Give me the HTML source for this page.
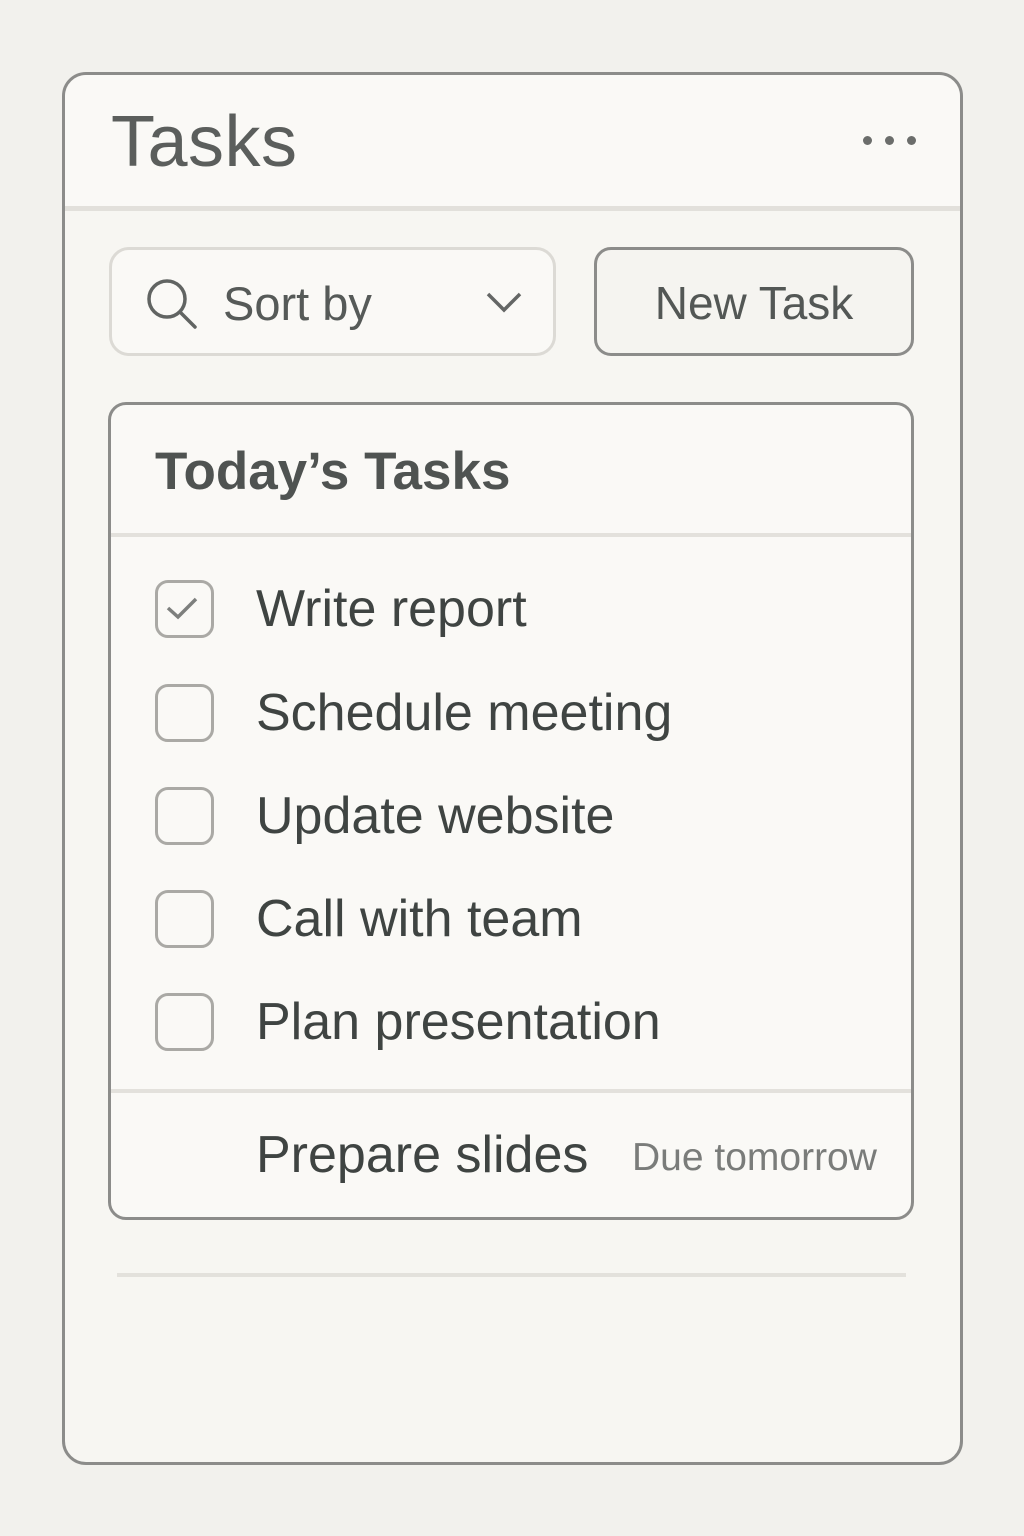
<!DOCTYPE html>
<html><head><style>
body{margin:0;width:1024px;height:1536px;background:#f2f1ed;font-family:"Liberation Sans",sans-serif;position:relative;overflow:hidden}
.a{position:absolute;box-sizing:border-box}
.t{position:absolute;white-space:nowrap;line-height:1}
.cb{position:absolute;left:155px;width:59px;height:58px;border:3px solid #aaa9a5;border-radius:13px;box-sizing:border-box}
.it{position:absolute;left:256px;font-size:52px;letter-spacing:0px;color:#3f4442;line-height:1;white-space:nowrap}
</style></head><body>
<div class="a" style="left:62px;top:72px;width:901px;height:1393px;border:3px solid #8c8c8a;border-radius:24px;background:#f7f6f2"></div>
<div class="a" style="left:65px;top:75px;width:895px;height:133px;background:#faf9f6;border-radius:22px 22px 0 0"></div>
<div class="a" style="left:65px;top:206px;width:895px;height:5px;background:#e2e0db"></div>
<div class="t" style="left:111px;top:106px;font-size:72px;letter-spacing:0.5px;color:#5b5e5c">Tasks</div>
<div class="a" style="left:863px;top:136px;width:9px;height:9px;border-radius:50%;background:#6b6d6b"></div>
<div class="a" style="left:885px;top:136px;width:9px;height:9px;border-radius:50%;background:#6b6d6b"></div>
<div class="a" style="left:907px;top:136px;width:9px;height:9px;border-radius:50%;background:#6b6d6b"></div>

<div class="a" style="left:109px;top:247px;width:447px;height:109px;border:3px solid #dcdad5;border-radius:20px;background:#faf9f6"></div>
<svg class="a" style="left:140px;top:272px" width="60" height="60" viewBox="0 0 60 60"><circle cx="27" cy="27" r="18" fill="none" stroke="#616462" stroke-width="3.5"/><line x1="40" y1="40" x2="55" y2="55" stroke="#616462" stroke-width="3.5" stroke-linecap="round"/></svg>
<div class="t" style="left:223px;top:280px;font-size:47px;color:#565a58">Sort by</div>
<svg class="a" style="left:484px;top:290px" width="40" height="26" viewBox="0 0 40 26"><polyline points="4,4 20,20 36,4" fill="none" stroke="#646665" stroke-width="3.5"/></svg>

<div class="a" style="left:594px;top:247px;width:320px;height:109px;border:3px solid #8c8c8a;border-radius:17px;background:#f5f4f0"></div>
<div class="t" style="left:594px;width:320px;text-align:center;top:280px;font-size:46px;color:#535755">New Task</div>

<div class="a" style="left:108px;top:402px;width:806px;height:818px;border:3px solid #8c8c8a;border-radius:18px;background:#faf9f6"></div>
<div class="t" style="left:155px;top:445px;font-size:53px;color:#4f5351;font-weight:bold">Today’s Tasks</div>
<div class="a" style="left:111px;top:533px;width:800px;height:4px;background:#e3e1dc"></div>

<div class="cb" style="top:580px"></div>
<svg class="a" style="left:163px;top:590px" width="44" height="38" viewBox="0 0 44 38"><polyline points="5,18 15,27 33,9" fill="none" stroke="#7d7f7d" stroke-width="3.5"/></svg>
<div class="it" style="top:583px">Write report</div>
<div class="cb" style="top:684px"></div><div class="it" style="top:687px">Schedule meeting</div>
<div class="cb" style="top:787px"></div><div class="it" style="top:790px">Update website</div>
<div class="cb" style="top:890px"></div><div class="it" style="top:893px">Call with team</div>
<div class="cb" style="top:993px"></div><div class="it" style="top:996px">Plan presentation</div>

<div class="a" style="left:111px;top:1089px;width:800px;height:4px;background:#e3e1dc"></div>
<div class="it" style="top:1129px">Prepare slides</div>
<div class="t" style="left:632px;top:1138px;font-size:39px;color:#7a7c7a">Due tomorrow</div>

<div class="a" style="left:117px;top:1273px;width:789px;height:4px;background:#e3e1dc"></div>
</body></html>
